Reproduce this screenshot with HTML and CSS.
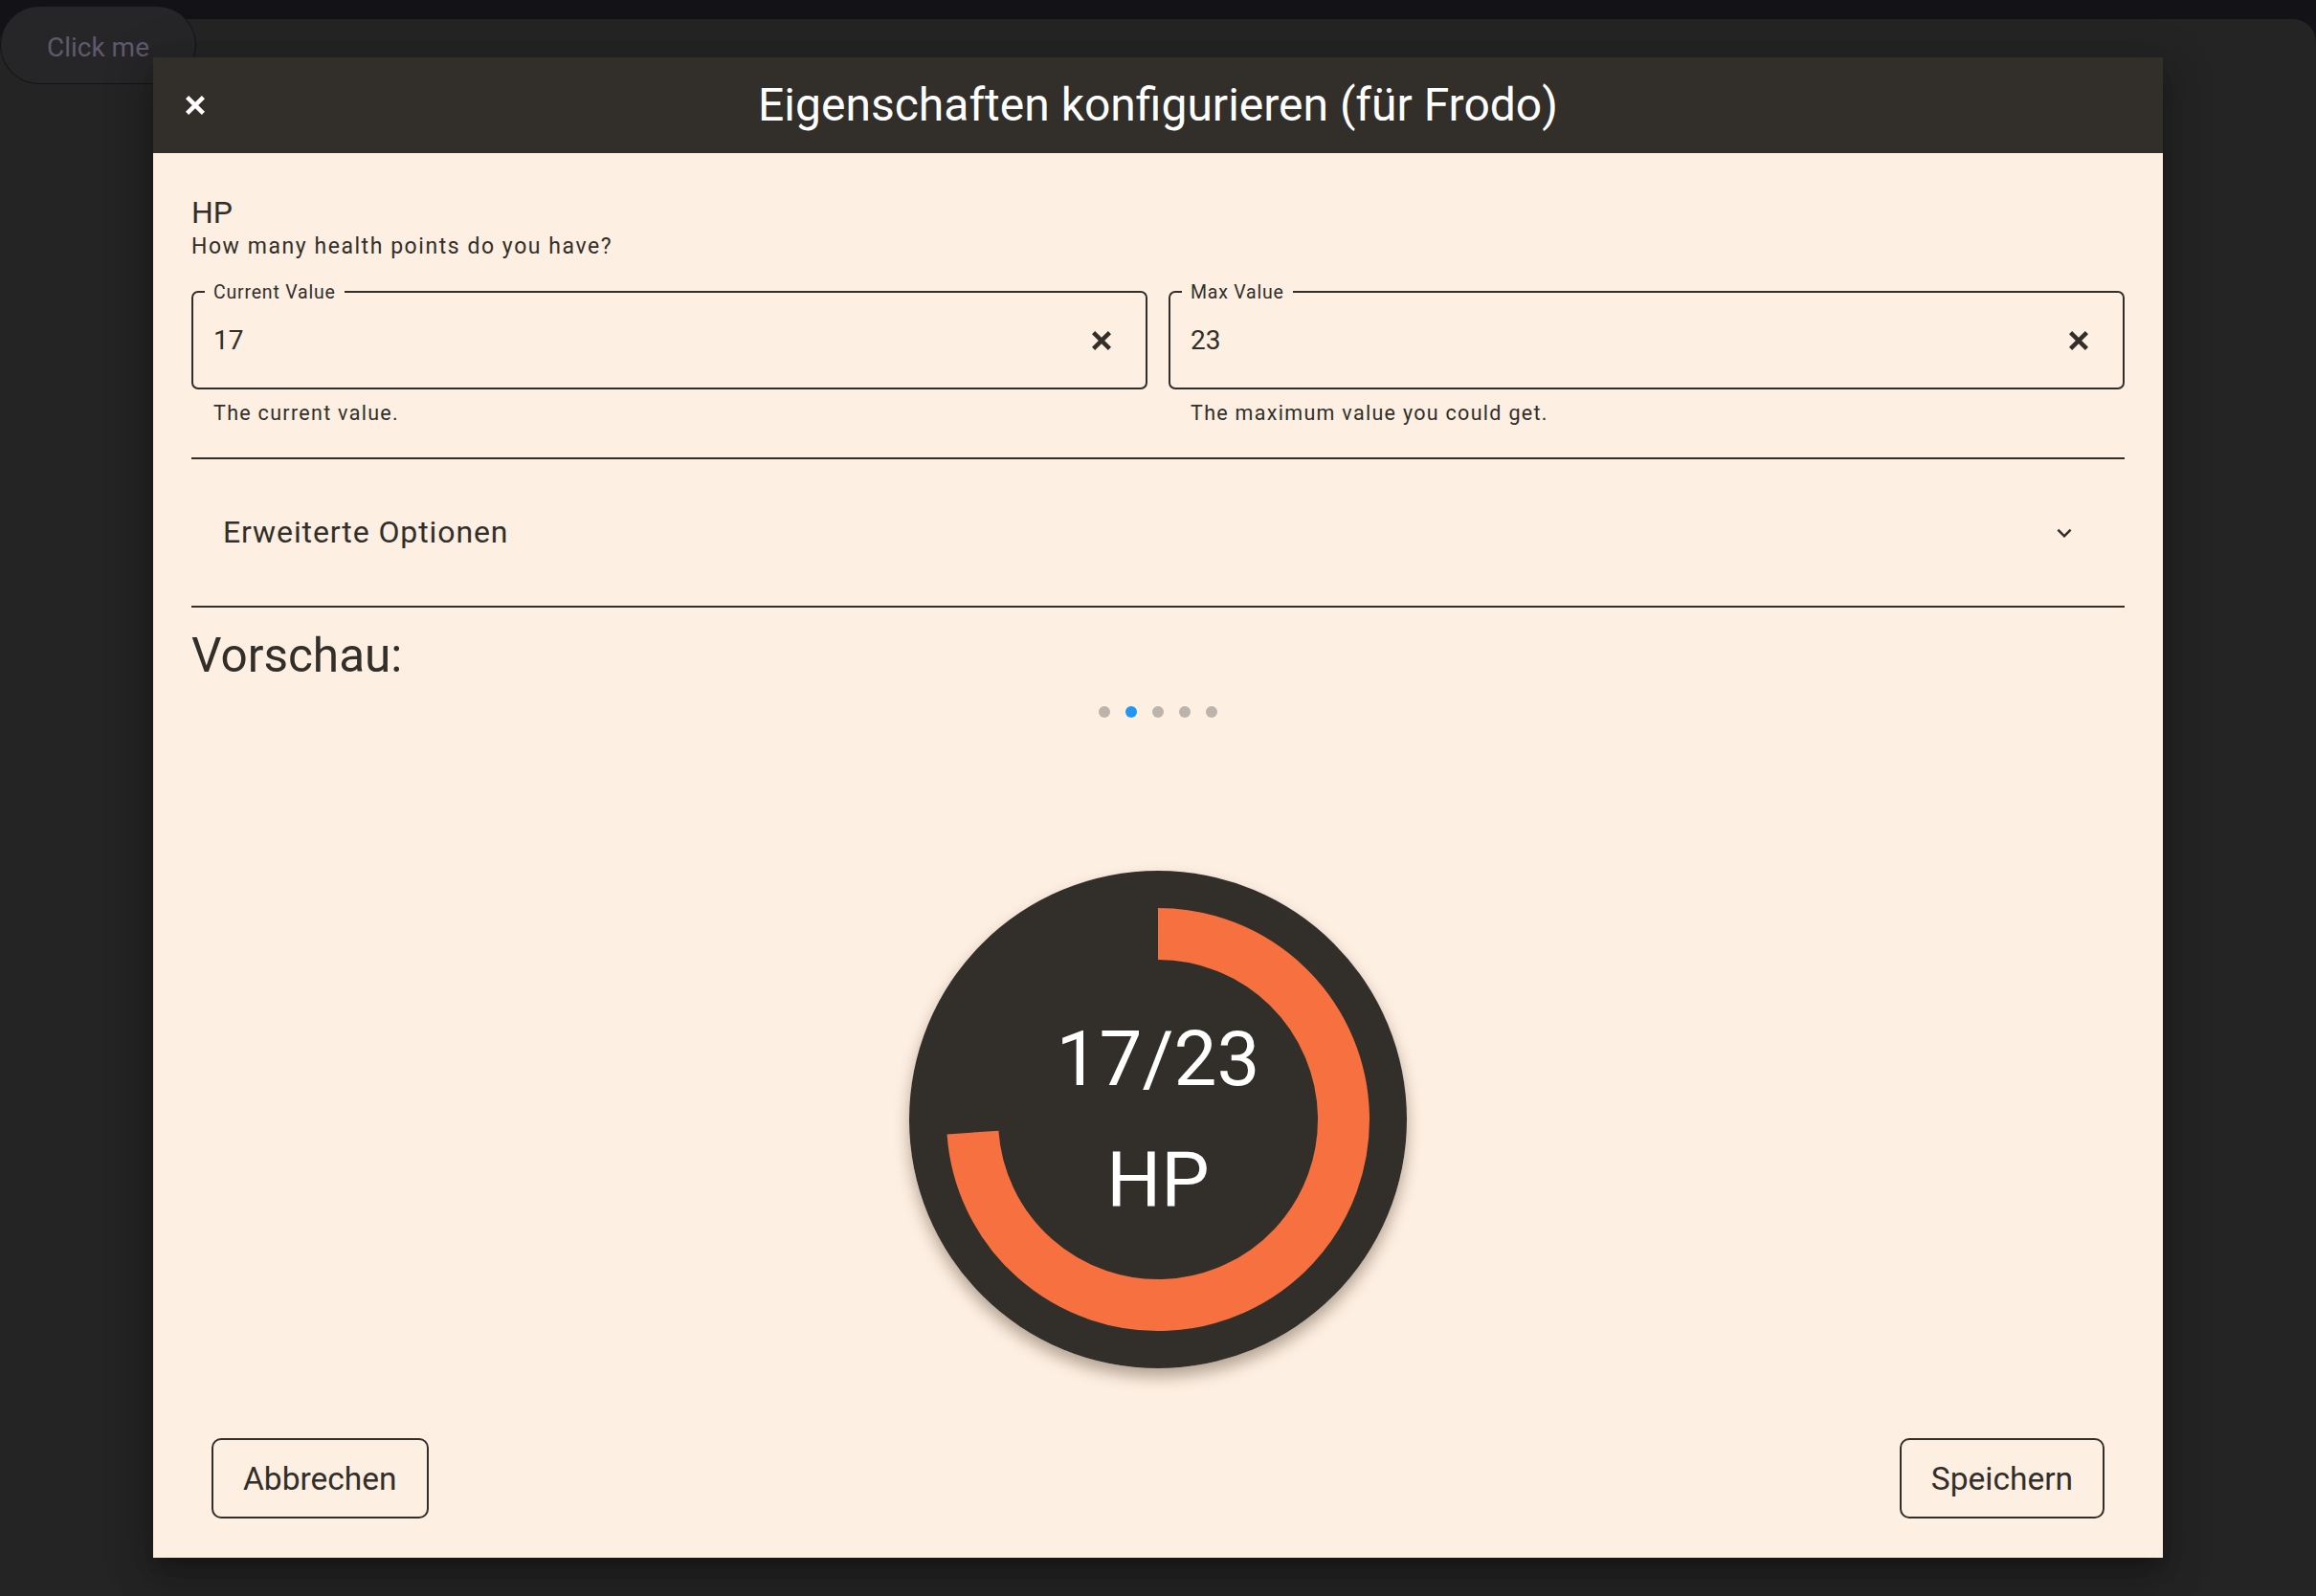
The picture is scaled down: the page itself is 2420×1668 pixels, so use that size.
FILE: index.html
```html
<!DOCTYPE html>
<html lang="de">
<head>
<meta charset="utf-8">
<title>Eigenschaften konfigurieren</title>
<link rel="stylesheet" href="styles.css">
</head>
<body>
<div class="screen">
  <button class="click-me">Click me</button>
  <div class="panel">
    <div class="dialog">
      <header class="dlg-header">
        <button class="dlg-close" aria-label="Schließen">
          <svg viewBox="5 5 14 14" width="20" height="20"><path d="M5 7.2 L7.2 5 L12 9.8 L16.8 5 L19 7.2 L14.2 12 L19 16.8 L16.8 19 L12 14.2 L7.2 19 L5 16.8 L9.8 12Z" fill="#ffffff"/></svg>
        </button>
        <h1 class="dlg-title">Eigenschaften konfigurieren (für Frodo)</h1>
        <span class="dlg-spacer"></span>
      </header>
      <div class="dlg-body">
        <div class="prop-name">HP</div>
        <div class="prop-desc">How many health points do you have?</div>
        <div class="fields">
          <div class="field-wrap">
            <div class="field">
              <span class="field-label">Current Value</span>
              <span class="field-value">17</span>
              <svg class="clear" viewBox="5 5 14 14" width="20" height="20"><path d="M5 7.2 L7.2 5 L12 9.8 L16.8 5 L19 7.2 L14.2 12 L19 16.8 L16.8 19 L12 14.2 L7.2 19 L5 16.8 L9.8 12Z" fill="#322e29"/></svg>
            </div>
            <div class="helper">The current value.</div>
          </div>
          <div class="field-wrap">
            <div class="field">
              <span class="field-label">Max Value</span>
              <span class="field-value">23</span>
              <svg class="clear" viewBox="5 5 14 14" width="20" height="20"><path d="M5 7.2 L7.2 5 L12 9.8 L16.8 5 L19 7.2 L14.2 12 L19 16.8 L16.8 19 L12 14.2 L7.2 19 L5 16.8 L9.8 12Z" fill="#322e29"/></svg>
            </div>
            <div class="helper">The maximum value you could get.</div>
          </div>
        </div>
        <div class="accordion">
          <span class="acc-title">Erweiterte Optionen</span>
          <svg class="chevron" viewBox="0 0 24 24" width="30" height="30"><path d="M16.59 8.59L12 13.17 7.41 8.59 6 10l6 6 6-6z" fill="#322e29"/></svg>
        </div>
        <h2 class="preview-title">Vorschau:</h2>
        <div class="dots">
          <span class="dot"></span>
          <span class="dot active"></span>
          <span class="dot"></span>
          <span class="dot"></span>
          <span class="dot"></span>
        </div>
        <div class="gauge">
          <svg class="gauge-svg" viewBox="0 0 520 520" width="520" height="520">
            <circle cx="260" cy="260" r="260" fill="#322e29"/>
            <path d="M 260 66 A 194 194 0 1 1 66.47 273.53" fill="none" stroke="#f7703f" stroke-width="54"/>
          </svg>
          <div class="gauge-text">
            <div>17/23</div>
            <div>HP</div>
          </div>
        </div>
      </div>
      <div class="dlg-actions">
        <button class="btn">Abbrechen</button>
        <button class="btn">Speichern</button>
      </div>
    </div>
  </div>
</div>
</body>
</html>
```
FILE: styles.css
```css
* { box-sizing: border-box; }
html, body {
  margin: 0;
  padding: 0;
  background: #131217;
}
body {
  font-family: Roboto, "Noto Sans", "Liberation Sans", sans-serif;
  color: #322e29;
}
.screen {
  position: relative;
  width: 2420px;
  height: 1668px;
  overflow: hidden;
}
.click-me {
  position: absolute;
  top: 6px;
  left: 0;
  width: 205px;
  height: 82px;
  border-radius: 41px;
  border: 1px solid rgba(0, 0, 0, 0.45);
  background: #262628;
  color: #5e5a6c;
  font-family: Roboto, sans-serif;
  font-size: 28px;
  padding: 4px 0 0;
  z-index: 1;
}
.panel {
  margin-top: 20px;
  height: 1648px;
  background: #242424;
  border-radius: 24px 24px 0 0;
  padding-top: 40px;
}
.dialog {
  position: relative;
  z-index: 2;
  width: 2100px;
  margin-left: 160px;
  background: #fdefe2;
  box-shadow: 0 11px 15px -7px rgba(0,0,0,.25), 0 24px 38px 3px rgba(0,0,0,.16), 0 9px 46px 8px rgba(0,0,0,.14);
}
.dlg-header {
  height: 100px;
  background: #322e29;
  display: grid;
  grid-template-columns: 1fr auto 1fr;
  align-items: center;
}
.dlg-close {
  justify-self: start;
  margin-left: 34px;
  width: 20px;
  height: 20px;
  padding: 0;
  border: 0;
  background: transparent;
  display: flex;
}
.dlg-title {
  margin: 0;
  font-size: 48px;
  font-weight: 400;
  color: #ffffff;
  line-height: 56px;
}
.dlg-body {
  padding: 42px 40px 0;
}
.prop-name {
  font-size: 32px;
  line-height: 40px;
}
.prop-desc {
  margin-top: 3px;
  font-size: 23px;
  line-height: 26px;
  letter-spacing: 1.55px;
}
.fields {
  margin-top: 33px;
  display: grid;
  grid-template-columns: 1fr 1fr;
  gap: 22px;
}
.field {
  position: relative;
  height: 103px;
  border: 2px solid #322e29;
  border-radius: 7px;
  display: flex;
  align-items: center;
  padding: 0 36px 0 21px;
}
.field-label {
  position: absolute;
  top: -11px;
  left: 12px;
  padding: 0 9px;
  background: #fdefe2;
  font-size: 19.5px;
  line-height: 22px;
  letter-spacing: 0.8px;
}
.field-value {
  flex: 1;
  font-size: 28px;
  line-height: 34px;
}
.clear { display: block; }
.helper {
  margin-top: 13px;
  padding-left: 23px;
  font-size: 21.5px;
  line-height: 24px;
  letter-spacing: 1.3px;
}
.accordion {
  margin-top: 34px;
  height: 157px;
  border-top: 2px solid #322e29;
  border-bottom: 2px solid #322e29;
  display: flex;
  align-items: center;
  justify-content: space-between;
  padding: 0 48px 0 33px;
}
.acc-title {
  font-size: 32px;
  letter-spacing: 0.9px;
  margin-top: -2px;
}
.chevron { display: block; }
.preview-title {
  margin: 22px 0 0;
  font-size: 49.5px;
  font-weight: 400;
  line-height: 56px;
}
.dots {
  margin-top: 25px;
  display: flex;
  justify-content: center;
  gap: 16px;
}
.dot {
  width: 12px;
  height: 12px;
  border-radius: 50%;
  background: #bcb3aa;
}
.dot.active { background: #2196f3; }
.gauge {
  margin: 160px auto 0;
  width: 520px;
  height: 520px;
  border-radius: 50%;
  box-shadow: 0 9px 16px rgba(70, 50, 30, 0.4);
  display: grid;
}
.gauge-svg, .gauge-text { grid-area: 1 / 1; }
.gauge-svg { display: block; }
.gauge-text {
  align-self: center;
  text-align: center;
  color: #ffffff;
  font-size: 80px;
  line-height: 126px;
}
.dlg-actions {
  margin-top: 73px;
  padding: 0 61px 41px;
  display: flex;
  justify-content: space-between;
}
.btn {
  height: 84px;
  padding: 0 31px;
  border: 2px solid #322e29;
  border-radius: 10px;
  background: transparent;
  color: #322e29;
  font-family: Roboto, sans-serif;
  font-size: 33.5px;
}
```
